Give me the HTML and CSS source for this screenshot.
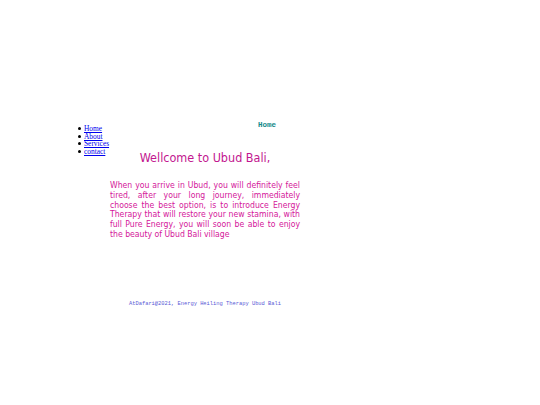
FILE: index.html
```html
<!DOCTYPE html>
<html>
<head>
<meta charset="utf-8">
<link rel="stylesheet" href="styles.css">
</head>
<body>
<div class="page">
  <div class="top">
    <h4 class="crumb">Home</h4>
  </div>
  <div class="row">
    <ul class="nav">
      <li><a href="#">Home</a></li>
      <li><a href="#">About</a></li>
      <li><a href="#">Services</a></li>
      <li><a href="#">contact</a></li>
    </ul>
    <div class="main">
      <h1 class="title">Wellcome to Ubud Bali,</h1>
      <p class="text">When you arrive in Ubud, you will definitely feel tired, after your long journey, immediately choose the best option, is to introduce Energy Therapy that will restore your new stamina, with full Pure Energy, you will soon be able to enjoy the beauty of Ubud Bali village</p>
      <p class="foot">AtDafari@2021, Energy Heiling Therapy Ubud Bali</p>
    </div>
  </div>
</div>
</body>
</html>
```
FILE: styles.css
```css
html, body { margin: 0; padding: 0; background: #fff; }
.page { padding-top: 121px; }
.top { padding-left: 258px; height: 4px; }
.crumb {
  margin: 0;
  font-family: "Liberation Mono", monospace;
  font-weight: bold;
  font-size: 7.5px;
  color: #138a8a;
  line-height: 8px;
}
.row { display: flex; padding-left: 78px; }
.nav {
  margin: 0;
  padding: 0;
  width: 32px;
  list-style: none;
  font-family: "Liberation Serif", serif;
  font-size: 7.4px;
  line-height: 7.5px;
}
.nav li { display: flex; align-items: center; gap: 3px; }
.nav li::before {
  content: "";
  width: 3px;
  height: 3px;
  border-radius: 50%;
  background: #000;
  flex: none;
}
.nav a { color: #0000ee; }
.main { width: 190px; padding-top: 26px; }
.title {
  margin: 0;
  text-align: center;
  font-family: "DejaVu Sans", sans-serif;
  font-stretch: condensed;
  font-weight: normal;
  font-size: 12.5px;
  color: #c2168f;
  line-height: 14px;
}
.text {
  margin: 16px 0 0 0;
  text-align: justify;
  font-family: "DejaVu Sans", sans-serif;
  font-stretch: condensed;
  font-size: 8.6px;
  line-height: 9.8px;
  color: #d4169a;
}
.foot {
  margin: 61px 0 0 0;
  text-align: center;
  font-family: "Liberation Mono", monospace;
  font-size: 5.4px;
  color: #5a5ad6;
}
```
